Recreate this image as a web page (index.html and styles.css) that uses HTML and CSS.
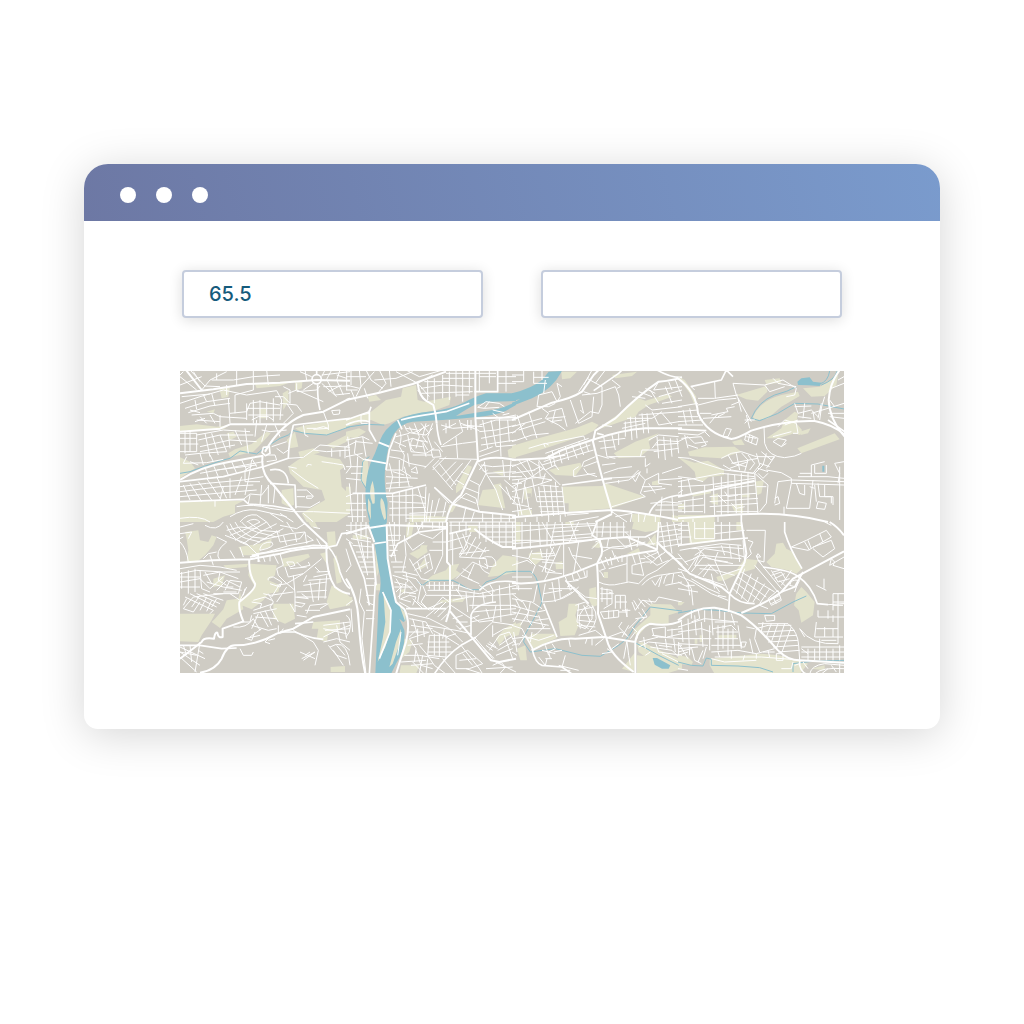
FILE: index.html
```html
<!DOCTYPE html>
<html lang="en">
<head>
<meta charset="utf-8">
<meta name="viewport" content="width=device-width, initial-scale=1">
<title>Map</title>
<link rel="stylesheet" href="styles.css">
</head>
<body>
<main class="window">
  <header class="titlebar"><span class="dot"></span><span class="dot"></span><span class="dot"></span></header>
  <div class="content">
    <form class="fields">
      <input class="field" type="text" value="65.5" aria-label="First value">
      <input class="field" type="text" aria-label="Second value">
    </form>
    <svg class="map" viewBox="0 3 1992 906" role="img" aria-label="City map">
      <!-- north-west -->
      <g>
        <path class="park" d="M0 168L50 163 110 170 150 165 130 178 50 180 0 184ZM0 262L30 275 45 295 0 325ZM0 395L190 392 165 405 165 430 130 440 100 456 0 456ZM325 290Q370 255 400 252L440 262 480 268 495 290 480 300 485 350 510 375V430L470 456H380L365 430 400 410 435 390 425 360 370 350 330 310ZM305 360L340 355 342 405 325 410 305 400ZM380 165L510 145V170L440 195 370 190 345 175ZM440 225L510 190V210L460 235ZM320 210L345 185 355 230 330 235ZM145 250L165 238 215 222 260 185 272 190 240 225 220 245 150 262ZM225 42L310 35 350 30 300 48 230 55ZM345 35L368 30 365 55 345 62ZM118 55L150 50 145 80 125 85ZM80 125L105 118 100 130ZM238 118L258 115V145H240ZM308 70L325 60V95L310 120ZM140 190L160 185 170 200 150 210ZM355 245L400 235 420 248 360 262Z"/>
        <path class="stream" d="M0 310L30 305 70 290 130 270 150 265 180 243 230 252 245 240 300 205 325 195 340 182 375 190 440 195 510 170"/>
        <path class="main" d="M0 330Q60 290 150 275L250 257M0 185L120 176 150 163H320M0 70L100 58 200 42 300 38 410 30 510 32M255 245Q300 165 370 135L430 125Q460 110 510 85M248 257Q240 310 280 345L370 456M18 0L65 60"/>
        <path class="road" d="M410 0V15M413 42Q412 90 420 120M340 165L510 145M330 210L340 165M330 210Q325 240 325 265L250 290 130 320 0 335M270 340L345 345 348 415M0 395L190 388 205 402 280 408 345 420M250 232L268 230 270 250 256 257 246 248ZM396 28a14 14 0 1 0 28 0a14 14 0 1 0 -28 0M325 340Q320 290 270 300"/>
        <path class="lane" d="M0 20L50 60M0 45L65 20M30 0L75 48 120 50M65 60L90 30 140 5M40 5L60 35M10 5L0 15M95 30H160L220 20 300 15M110 10V30M220 0V60L165 75V130M170 0V45M260 0L265 45M140 45V75M0 100L60 80 130 60 200 75 290 62M5 80L90 72M15 115L80 95 150 85M25 128L90 108 150 100M70 75L80 95M95 70L105 108M45 90L50 118M145 85L150 160M150 130L200 125 210 100 240 95 300 105M200 100V150M220 90V160M240 90V160M260 95V150M280 85V155M290 62L305 90 300 150M285 80H310L330 100V60L310 50M325 70L350 60M350 40V62M350 60L430 95M300 100L350 105 365 125M200 115H300M205 135H310M215 150L235 140H265L280 150M320 100L340 130 310 160M35 135L100 130 120 140 200 145M50 150L120 155M60 140L80 160M90 135L105 160M120 135V170M45 155L75 145M30 120L60 128"/>
        <path class="lane" d="M0 190H50V245H0M15 185V250M30 185V245M0 205H50M0 222H55M50 195L130 180 210 185M55 210L120 195 220 195M60 230L150 210 230 215M60 245L165 225M75 190L90 260M95 190L115 255M120 195L140 245M145 190L150 235M165 180L185 225M195 175L205 250M15 255L60 250 140 245M20 260L10 280 80 278 130 268M30 275L55 285M60 250L70 285M90 255L100 275M0 350L80 340 190 330 250 320M0 365L120 350 220 345M0 380L110 370 230 360M10 345L30 390M30 340L65 395M55 335L95 390M80 325L120 385M110 320L140 385M130 350L120 390M150 325V385M185 320L165 375M215 270L205 330 195 375M220 285L195 300V335H240M75 290L85 325M100 285L115 320M130 280L145 315M155 275L170 310M185 270L200 300M110 300L230 285M60 310L250 275M215 265L230 290M190 388L210 372 245 375 265 350M210 375L205 400M245 345L240 405M265 345V400M285 350L280 400M300 375L330 410M105 390V410M245 180L270 185 320 180M260 165L245 215M285 165L300 200M230 150L225 200M260 255L285 255 290 270 260 275M290 235L310 250 325 240M275 230L320 215"/>
        <path class="lane" d="M435 0L425 20M455 0L440 28 465 75 510 70M480 0L470 30 490 75M500 0V60M425 15L510 5M425 40L470 80M420 48L410 60 350 65M400 40L370 60M395 20L360 5M430 50L510 48M445 65L485 45M470 15L500 25M375 0L380 30M455 122L480 120 478 132 460 134ZM430 125L445 165V180M380 175H410L430 170 445 175 400 178M370 165L375 195 385 200M325 265L370 262 400 240 440 245 510 240M400 240L420 225 510 232M325 290L350 295M380 290Q380 280 395 285M425 275L460 280 490 285 495 300M455 235V260M480 240V260M495 228V265M335 300L375 330 415 355M350 360H380L400 378 395 385H380V378H400M350 380H375M348 410L390 412 420 395M170 410Q220 400 270 415L340 425 400 425 510 430M150 440Q190 415 230 420L320 440M180 456Q200 430 230 435L260 456M200 456Q225 440 240 456M0 445Q60 435 90 456M270 430L310 456M300 430L340 456M370 430L400 456"/>
      </g>
      <!-- river bend -->
      <g transform="translate(498 0)">
        <path class="park" d="M0 150L60 130 75 125 120 90 165 80 170 55 210 45 215 90 235 95 315 80 310 105 270 120 170 140 130 160 110 165 75 150 0 170ZM0 185L40 175 60 185 30 205 0 200ZM50 265L65 270 68 300 60 350 45 335ZM330 350L365 285 378 290 350 355 330 370ZM410 360L465 355 478 415 395 405ZM485 240L510 228V265L488 262ZM310 405L335 400 320 425 305 430ZM190 435L300 440V456H190ZM440 305L475 300 470 318ZM440 345L465 340 468 355 445 358ZM0 350H14V400L0 410ZM65 80L90 75 105 90 70 95Z"/>
        <path class="stream" d="M0 172L60 163 115 165M70 260L50 275 45 330 60 355"/>
        <path class="water" d="M510 70H420Q390 78 350 100 310 118 260 124 190 130 155 150 115 175 100 215 88 250 75 275 58 320 58 380 60 420 72 460H122L125 400Q112 340 118 290 125 220 145 190 165 160 200 155L290 150Q350 145 400 140 450 135 480 122L510 105V95Q470 115 440 120L330 138Q365 115 385 105L430 95 510 93Z"/>
        <path class="park" d="M80 332Q64 365 80 402L86 400Q88 360 80 332ZM105 384Q98 410 115 450L120 445Q118 390 105 384ZM66 385V420L75 450 74 400Z"/>
        <path class="main" d="M0 90L100 68 200 42 300 5M215 40Q220 80 240 92L262 105Q270 130 272 160M388 0V140L396 270 345 375Q310 400 300 456M390 145L510 142M396 275Q430 255 510 270M98 217L130 230M320 402L400 425 510 437"/>
        <path class="road" d="M272 160Q275 200 285 225M0 150L70 125 75 110M70 120V180L90 215M55 268L120 280M155 150L168 178M20 370H140L240 345M265 352L325 405M455 0V65H385M165 150Q200 140 300 125L370 100M150 190L130 240 120 300M0 165Q40 145 70 155"/>
        <path class="lane" d="M0 45L40 55 85 5M0 20H60M15 0V45M40 0L45 50 30 80M60 0L75 30 110 55M85 30L150 25 200 5M100 0L120 40 95 70M130 0L135 50M150 5L215 40 260 15M180 0L220 20 290 0M55 55L65 85M15 60L30 95M0 60L35 60M240 92L215 60M225 55L290 45 380 50M225 70L380 65M245 30V90M265 25V100M290 15V85M310 5V90M330 0V80M350 0V95M370 0V70M290 25H385M300 10H450M220 45L250 80M235 35L310 35M400 20H450M400 0V65M430 0V40M455 20H510M455 40H510M480 0V65M330 75H370M430 95L415 115 395 112 420 95 460 100 475 110M415 115L460 112M440 120L475 128"/>
        <path class="lane" d="M0 210L50 200 70 210M0 230L30 215 80 220M5 200L15 290 0 310M30 210L25 250 55 270M50 200L60 260M0 260L50 250M0 290H50M15 310H50M0 325L45 330M35 260L30 370M10 340L20 456M35 370V456M50 370V456M0 400H60M0 420H60M5 440H60M0 380L25 370M70 130L45 135V160H65M160 180Q170 200 160 230L175 255 170 300M175 165Q185 200 210 185L250 165M170 215L200 205 230 215 245 240M185 195L195 245 240 250 265 235M200 205Q185 230 205 245M215 190L235 170M190 170L200 190 240 195 260 175M180 175L215 180M205 160L220 200 210 235M240 160L230 200 245 220M225 160L250 190M260 160L245 200 260 240M210 210L245 215M190 225L230 230M150 200L190 190M145 215L180 230M135 240L175 245M130 260L160 265 190 280 240 290M120 300L165 300 195 320M130 280L140 320 130 365M160 270V350M175 290L190 350M120 320L215 325M120 340L190 335M120 355L200 350M140 305L175 315M195 300L210 290 215 310 195 305M185 250L190 290M200 255L260 255M255 240L280 240 285 260 260 262ZM265 215L290 245M230 220L240 260"/>
        <path class="lane" d="M285 165L320 175 385 170M290 180L330 160M300 160V190M310 150V175M340 150L350 185 290 225M350 165L410 170M365 150V180M375 150V180M330 200L335 265M285 230L350 220 390 215M280 265L395 268M345 160L400 182M280 270L260 290 320 360M280 280L330 345M265 265L250 280 235 295M260 300L300 260M285 320L330 275M300 335L350 280M315 350L375 270M330 330L355 345M345 305L370 315M120 380L210 375 240 385M130 395L240 400M130 415L240 412M130 435H240M140 370V456M160 365V456M180 360V456M200 355V456M215 350L240 430M240 350L235 456M265 352L310 400M250 370L240 456M260 390L250 456M280 385L265 440M300 395L290 440M190 430L300 425M180 445H300M320 405L360 370 390 385 400 425M340 380L390 400M350 350L400 370M370 330L400 345 395 400M396 280L420 310 450 360M405 285L440 290 510 285M420 310L400 350M415 275L420 310 510 305M430 320H510M470 270L475 320M495 270L490 330M400 300L415 280M410 300Q415 310 425 300M400 165L450 150 510 150M400 185L450 180 510 165M405 205L510 185M405 225L510 210M400 245L440 230M410 150L425 235M435 150L450 230 510 225M460 145L465 260M485 150L490 215M400 260L460 240M440 130L460 145 510 135M470 135L490 130M450 360L470 420M460 345L510 400M475 330L510 360M480 350L495 390M360 410L350 456M385 425L375 456M410 430V456M440 430V456M465 435V456M490 438V456M300 445H510"/>
      </g>
      <!-- north-east hills -->
      <g transform="translate(996 0)">
        <path class="water" d="M0 70Q60 55 90 30L110 5 150 3Q120 60 60 85L0 108V98L25 88 0 92Z"/>
        <path class="park" d="M0 228L60 210 190 175 240 155 260 165 245 182 220 195 100 235 0 265ZM265 170L330 125 380 85 400 92 470 72 480 80 410 105 380 125 370 140 260 178ZM305 250L370 215 440 190 410 215 415 235 385 260 320 264ZM110 300L145 290 205 278 210 290 190 318 130 315ZM150 350L270 348 280 340 400 380 300 415 170 425V400H155ZM35 355L60 355 58 380 38 390ZM20 420L60 420V437L20 435ZM360 432L445 435V456H360ZM148 5L195 5 175 25 150 28ZM300 15L375 5 360 18 310 25ZM420 335L440 330 442 345 420 345ZM480 435L510 440V456H480Z"/>
        <path class="land" d="M45 370h12v12h-12Z"/>
        <path class="main" d="M0 150L120 98Q180 85 210 65L245 15 260 0M0 270L100 265 150 240 240 210Q330 180 400 175L510 175M510 22Q490 30 440 35 380 75 310 145L250 182 243 215Q265 310 298 418L300 430M0 442L170 428 300 420Q380 425 510 452M250 456L300 432"/>
        <path class="road" d="M245 62L320 10 330 0M255 190L275 195M435 0Q480 25 510 22M100 265L160 255M150 345L300 325M410 435Q430 380 510 375"/>
        <path class="lane" d="M0 35H35V3M0 15H35M65 5V40H105M65 22H110M90 0V30M75 110L80 75 120 65 135 95 145 80 135 40 150 50M95 70L100 30M75 110H110L130 100M175 90L200 160 240 140 245 80M205 90L215 130 205 120M190 160L235 125 260 130 270 105V50M210 75L255 70 310 50 320 75 325 110M225 25L270 50M240 0L215 45M280 0L250 40M200 65L230 20M300 30L325 50 315 55M215 65L235 72M0 190L40 160M0 215L60 195 110 190M15 135L35 195 45 210M50 125L75 205M90 115L110 130 100 145 140 165 160 180M0 170L90 145M20 180L100 155M110 125L150 115 165 170M130 120L120 160M105 145L160 140M115 155L150 150M50 235L100 220 110 225M100 232L95 222 215 198 220 210"/>
        <path class="lane" d="M100 250L230 205M95 275L150 255 235 225M90 285L245 240M120 240L130 290M140 240L150 280M160 230L170 270M180 225L195 265M200 215L215 255M220 215L230 245M110 255L120 290M80 270L100 300M100 300L130 285 140 300M210 290L215 275 250 260M215 290L255 275M215 295L225 310 255 320M185 320L250 310M185 320V300L200 290M255 255L290 265M275 200L285 260 310 265M260 215L340 205M265 235L310 230M300 195L310 240M320 190V225M340 155V200M355 140L360 210M370 140L375 205M390 130L395 190M405 130L410 190M335 160L410 150M330 175L400 160M345 145H420L450 125M420 125L440 165 500 155M450 130L480 165M380 135L510 125M400 105L420 120 510 110M415 60L440 100M440 80L510 60M450 100L510 90M460 50L480 100M440 35L425 60 510 50M470 35L480 60M490 30L510 80M360 80L400 85M380 65L420 80M400 55L430 70M270 165L300 170M410 210L440 195 500 200M420 235L440 210 500 215M435 200L440 265M455 200L460 270M475 205L480 260M495 205L500 250M430 225L500 220M425 245L500 235M385 260L390 240 440 240M290 260L400 260M400 265V290L415 280M270 285L310 280M275 310L320 295 360 290M275 325L370 320M280 340L350 330 385 305 370 335 360 320 380 300M320 340V330M380 310L400 330 385 370 400 380M400 330L440 310V340L480 345M405 310V295M390 350H450M395 365L460 355M300 410L400 380M410 340L430 370M450 310L510 290M440 330L510 325"/>
        <path class="lane" d="M0 290L50 270 100 300 145 345M0 310L70 300M45 270L65 320M20 270L60 320 120 330M0 330L100 320M15 290L45 325M80 275L85 320M95 295L60 320 0 350M65 300L85 290M100 310L90 340M120 330L75 345 0 365M150 350L160 440M130 335L140 435M115 345L125 438M95 345L110 440M80 350L90 440M60 325L75 395M40 330L30 400M20 330L5 400M85 345L140 350M80 365H150M75 380H155M75 395H155M80 410H158M85 425H160M0 380L25 385M0 400L50 410M10 350L30 435M0 425L60 415M15 400L20 440M50 410L60 440M40 350L50 410M0 340H30M0 320H30M10 445V456M40 445V456M75 440V456M110 438V456M145 435V456M165 435L230 430M170 456L260 440M310 440L360 430 355 456M380 430V456M400 435L395 456M430 435V456M415 400L460 395 510 400M450 380L445 440M480 380L485 445M430 420L510 420M435 405H510M300 425L345 456"/>
      </g>
      <!-- north-east lakes -->
      <g transform="translate(1494 0)">
        <path class="park" d="M225 140Q250 90 310 75L360 65 365 78 310 110 270 145 230 152ZM375 55L425 50 460 30 480 15 475 45 440 78 400 80ZM175 75L265 48 268 65 240 92 205 88ZM260 30L305 25 310 38 265 42ZM265 205L310 175 320 150 350 125 360 130 355 160 372 180 365 195 350 190 300 205ZM365 185L398 175 390 190 368 195ZM358 235L470 190 485 208 370 250ZM162 215L190 208 200 225 170 225ZM30 245L80 232 170 230 190 245 130 265 80 262 35 258ZM0 262L50 278 90 272 138 300V315L90 322 75 335 55 330 50 305 35 290ZM230 335L258 330 250 370 238 375ZM0 20L20 30 55 80 50 105 35 70ZM40 370L100 360 98 370 45 380ZM0 435H110V456H0ZM100 375L120 370 120 405 100 400ZM160 405L195 400V430L170 425ZM0 405L20 400V418H0ZM190 375L215 370V382H190Z"/>
        <path class="water" d="M358 35L370 25 395 22 405 35 430 38 425 48 390 46 360 45ZM433 287h6v18h-6Z"/>
        <path class="stream" d="M455 3Q450 35 425 42M355 50Q330 65 290 75 240 95 220 145L245 152Q300 135 350 100L420 102 498 117M478 3Q470 30 430 45"/>
        <path class="main" d="M0 25Q55 65 60 130 85 190 160 207 180 205 220 182 320 150 410 153 470 165 500 195M0 380L90 362 230 332M0 445L190 433Q330 425 450 456M485 0Q455 40 452 90 455 150 500 200"/>
        <path class="road" d="M38 50L130 30 145 0M0 178L85 182M145 0L165 20M450 150L500 185M190 433V456"/>
        <path class="lane" d="M60 85H110L180 75M40 50L50 60M110 35L112 85M60 105L120 90 175 85M165 40L175 75 200 120 220 155M165 40L260 45 315 30 355 55 350 75 325 80M180 85L190 125M260 45L275 65 320 50M285 25L300 40 355 50M160 105L185 95M100 135L150 125 145 115 170 110M120 140L140 130M95 160L120 130M65 130L100 130M75 145L160 140M200 150H230M205 135L215 175M215 145L200 160M0 110L60 100M0 125L60 120M0 140H60M0 155L75 150M0 165H75M15 120L25 165M35 115L45 160M0 190L60 195 80 185 95 200M10 205L70 200 85 225 70 230M0 215L30 200 50 220 90 215M20 195L30 235M30 225L60 235M145 175L160 178 150 200 135 200 140 185ZM205 190L200 210 235 225 240 205ZM215 195L210 215M225 198L220 220M235 205L205 200M258 170L260 220Q270 260 320 263L350 258 370 250M285 215L300 205 325 210 310 230M285 215L310 230 325 220M285 200L340 185M300 170L320 150 355 160 360 190 345 190M320 165L360 150M350 100L360 130 400 120 420 140M350 110L400 108M430 115L425 150M400 130L450 115 498 100M380 100L375 145M405 125L410 155M430 100L420 145M440 80L425 130M455 90L470 110M450 130L498 130M455 140L498 145M360 140L400 145M460 55L498 40M480 30L498 20"/>
        <path class="lane" d="M0 262L35 265 75 280 140 300 230 310M130 265L160 250 190 245 235 260 290 260M135 285L160 300 225 310M150 255L165 280 205 290M175 250L185 300M190 248L210 270 200 305M210 255L230 280 215 300M235 250L245 285 225 310M160 280L240 265M155 295L210 275M265 250L255 285 230 310 270 345 265 400 245 425M250 245L280 270 290 260 265 295M245 280L275 290M240 295L270 305M240 310L255 325 270 310M265 300L310 308 340 325V340L325 415H395L405 330M290 400L300 335 340 330M290 385L300 380 305 400 290 405M340 330L498 335M340 340L498 345M360 320H450L498 325M365 310H400V320M400 320V285L440 275M410 285V310H445V285M355 340L365 370 380 375V345M420 340L425 380H460V400M440 345V380H465V405M420 395L445 400 440 418 415 415ZM410 345L415 395M480 340L485 310 470 280 498 275M485 290V450M395 350L410 355M318 410V435M0 320L40 325 75 335M0 335L130 310 230 320M0 350L90 345 230 325M10 330V375M30 325L40 370M80 345V430M105 320L110 435M130 320V435M150 310V430M170 315L175 430M190 310V430M210 305V430M230 310L240 430M95 380L235 370M95 395L240 385M95 410L240 400M0 395L75 385M0 410L80 405M0 425H75M20 390V430M45 380V425M115 425H240M155 355L230 345M110 350L230 335M140 365L150 380 180 375M120 375L145 400M160 400L175 415 200 410M0 370L15 360M235 350L265 350M15 450V456M45 446V456M120 440V456"/>
      </g>
      <!-- south-west -->
      <g transform="translate(0 456)">
        <path class="park" d="M20 50L15 30 55 25 60 55 85 60 95 40 110 45 100 70 75 100 50 120 20 118 25 85ZM0 275H105L95 295 65 340 55 360 0 358ZM105 290L130 262 140 235 175 230 180 210 190 262 140 290 120 318 95 300ZM210 125L290 130 285 160 265 175 300 190 295 210 265 215 250 235 215 262 185 250 180 235 225 195 205 160ZM175 75L240 65 275 50 270 75 240 85 235 100 190 100ZM280 245H340L345 290 315 305 280 290ZM305 110L385 95 390 105 350 125 310 135ZM440 30L465 28 468 70 445 80ZM420 95L440 90V125ZM440 240L455 190 500 215 510 225V250L450 262ZM400 300L480 295V320L445 335 440 360 410 350 415 320 395 320ZM452 435L495 432V450H452ZM385 0H405L415 20 395 15ZM100 170L135 160 125 190 100 195ZM130 130L205 125 200 135 140 140ZM460 110L470 100 485 180 470 185Z"/>
        <path class="main" d="M0 122L100 115 210 112 300 95Q370 75 445 78M370 0L440 65Q435 150 465 195 490 215 510 215M0 410L65 360Q70 345 102 350 105 330 112 332 115 350 128 345V320L190 298Q175 265 178 240 230 200 225 185 205 155 208 112M60 452Q105 445 125 410 140 370 165 370 230 370 290 335 320 325 340 320L400 285 510 262"/>
        <path class="road" d="M215 100L300 85 400 70 445 72M445 75Q470 100 480 150 495 190 510 200M445 75L470 70 485 35 510 32M345 305L400 300M300 330L345 330 370 340Q400 350 430 352M0 370H60L125 380 170 378M210 105L235 100V120"/>
        <path class="lane" d="M0 15L40 5M0 35L35 30 25 50M0 60Q20 80 25 120M10 45L0 50M75 10Q110 30 130 0M110 45L140 60Q100 90 120 115M135 40L200 65 235 100M140 10Q150 40 180 60L205 70M150 5Q165 40 200 50L240 60M165 0Q180 30 215 45L260 50M185 0Q200 20 230 30L290 45M205 0L240 25 300 30M140 25L180 15 230 20M150 40L200 20 240 0M165 55L215 25 260 0M190 65L240 30 290 5M220 70L270 40 310 20M240 80Q245 60 275 60 290 75 240 85ZM230 95L260 90 330 70 385 60M240 55L330 35 375 30 360 50 300 60M300 10L350 20 375 5M320 0L340 30M290 25L300 60M260 0L275 20M310 40L320 70M345 35L350 60M375 30L380 65M380 40L400 55 380 60M410 50L425 75M400 15L420 20M70 110L85 95 110 90M150 85L165 110M180 75L190 105M90 100L100 130M0 140L60 130 120 135 170 145M0 155L50 145 130 150 180 150M0 180L60 170 90 200M5 150V200M25 145V215M45 140V210M0 165H60M0 195H60M60 145L65 200 90 210M70 160L120 150 175 170M90 200L130 165M80 180L130 195 185 205M110 205L140 175 180 195M75 150L95 185M120 150L115 175 140 190M135 205L150 175 185 180 175 215M140 195H160M130 210H170M100 215L175 215M10 260L40 225 130 215M15 225L100 265 90 275M10 260L40 270 60 240M30 215L110 255M50 215L120 245M70 215L130 235M20 230L10 250M60 220L35 255M80 225L60 265M95 235L80 268M110 230L95 255M150 215L180 235 200 195M195 200L190 220"/>
        <path class="lane" d="M240 120L235 110M250 105L255 120M280 95L295 125M270 100V118M300 95L310 130 290 140 295 160 315 180M320 120L330 135 345 130 340 120ZM350 120L365 135 390 130 385 120M330 140L380 135M265 175Q260 165 280 165L305 180 300 195 270 185M290 190L320 185 370 155 425 110M315 180L345 205M315 135L325 165 370 155M340 160L345 215V270M345 270L330 245M345 250L365 255 375 245 345 240M345 225L385 230 365 215M350 210L440 205M350 225H440M370 190L440 180M385 175L450 170M400 165L450 155M410 150L450 148M405 135L420 150M380 160L370 180M390 180L400 240M420 170L415 235M440 160L435 230M300 185L275 225M320 195L290 240M265 215L280 240 270 255M250 215L270 220 340 210M220 235L255 225 275 235M215 240L245 245 240 260M220 265L280 245M220 275L290 260M225 285L290 290M240 270L265 315M255 265L275 310M270 255L295 300M215 280L210 300 185 300M220 290L240 325M235 275L215 320M215 310L265 325 290 320M200 350L215 355 225 330M195 350L240 340M245 320L210 345M265 355L285 350M295 310V335M310 320L300 335M270 345L255 360 270 365M375 265H420M380 275L390 250 440 245M350 280L380 285M420 260L445 245M180 380L190 400 215 400 220 390M160 315Q200 320 220 290M340 325L400 360 415 385 405 430M360 390L405 410M370 415L405 390 365 410M375 400L390 390M430 310L510 300M430 320L500 335M435 325L510 320M430 360L470 350 510 360M445 370L470 400 500 410M450 375Q490 350 505 400L510 430M460 385L490 430M470 370L495 400M480 360L510 385M430 345L470 325 510 310M470 310L480 360M490 300L500 350M0 390L50 400M0 375L75 410M0 390L60 430M0 405L50 450M10 370L20 400M30 370L35 420M60 360L45 450M70 395L55 385"/>
      </g>
      <!-- river south -->
      <g transform="translate(498 456)">
        <path class="park" d="M0 225L18 225 20 240 0 250ZM182 5L205 0 195 50 180 45ZM365 10H395V30L370 30ZM225 70H245L235 95 215 100ZM190 95L240 70 245 90 215 110ZM215 140L235 110 245 130 220 145ZM235 180L260 160 300 145 310 130 340 125 330 145 345 155 315 175ZM425 165L440 130 470 100 510 105V150L470 160ZM285 235L360 225 350 240 280 242ZM90 70L98 150 92 165 88 90ZM90 185H102V205H90ZM175 350L200 355 190 390 165 410ZM165 430L220 430 210 456H160ZM450 350L475 320 510 300V330L480 345 460 370ZM20 40L65 40 68 52 20 52ZM160 205L178 200 175 215Z"/>
        <path class="water" d="M68 0H120L122 60Q128 130 140 190L152 245 178 265 180 295 172 300 160 290 175 325Q180 380 150 425L135 456H88L95 300 98 220Q110 190 98 140L85 60Z"/>
        <path class="park" d="M112 210L135 260 132 330 118 375 95 420 110 350 118 300ZM150 360L165 320 163 360 140 425 130 435ZM160 250L180 275 178 300Z"/>
        <path class="stream" d="M510 148L480 150 450 170 420 180 400 203 370 203 340 185 320 175 250 175 230 190 215 180"/>
        <path class="main" d="M68 18L122 10H150L300 15M122 10L125 110Q140 200 150 240L175 262Q195 300 180 360L150 456M303 0V120L312 130V260L300 300M0 170Q35 220 38 300 45 400 58 456M0 35L68 15 85 60M80 65L90 190M385 20Q420 50 470 75L510 75M310 265L435 415 460 420 510 410"/>
        <path class="road" d="M85 65L120 60M135 105L155 65 220 30 300 20M310 35L375 20M10 60L55 170 70 250M400 205Q430 170 510 180M375 340V280Q385 245 450 240M110 210L135 265 132 330 100 410M88 180L82 280 75 380 70 456M265 456Q300 400 345 370L390 345M180 260H300"/>
        <path class="lane" d="M0 10H70M0 25L75 50M15 0V35M30 0V40M45 0V50M60 0V45M15 50L75 60M20 70L80 75M0 50L20 65M30 90L85 90M35 105L85 105M40 120H88M45 135H85M50 150H85M45 60L65 160M30 35L60 140M0 80L15 130 0 150M65 45V110M60 170H85M60 190H85M60 220H85M62 240L85 250M45 200L40 240 55 270 48 350 60 456M60 265H85M60 290H85M0 250L20 235M0 280Q20 290 10 330L0 345M15 260L20 330M130 0L140 60 150 120M145 0V70M160 0V55M125 40H165M125 55H160M130 70H155M130 85H155M130 100H150M135 120H170M140 135H180M145 150H180M175 40L180 100 170 150 215 160M180 55L215 30 230 0M190 0L185 40M210 0L220 35 260 50 290 25M225 0H300M230 0V20M260 0V20M280 0V20M175 50L200 85 235 60M200 130L225 110 250 95 260 140 235 155M215 120L225 150M190 110L225 170 250 175M235 100L245 140M205 145L250 120M180 150L185 180M290 0V100L265 155M315 0V80M320 30V130M300 60L375 40M305 85L350 75M260 60H300M250 85H290"/>
        <path class="lane" d="M340 0V30M360 0V40M400 0V50M420 0V60M440 0V65M460 0V70M480 0V75M500 0V75M310 10H510M310 0H510M400 30H510M410 45H510M440 60H510M395 15H510M330 30L350 80 340 100M350 35L365 75 340 105 420 110 425 140 380 120 340 160 330 170M375 30L350 90M390 45L360 100M405 60L375 105M420 75L400 110M360 60L420 90M340 95L430 85M400 110Q450 90 450 130 430 140 415 125M400 115Q400 145 430 155M385 125L365 170 400 185M350 140L375 155M345 160L380 175M320 180V200M340 185L335 210M250 180V200M265 180V205M280 180V205M295 180V205M240 190H335L380 205M245 205H330L400 215 510 190M240 220H320L420 225M230 190L240 215 225 240 250 265M140 160L190 175 215 205 190 215M145 180L185 190 200 205M150 210L170 190M155 225L175 210 210 215M150 170L165 195 160 230 195 240M180 180L175 215M165 230L190 220 210 225 200 250M170 160L210 170 225 190 215 240 245 260 290 240M145 195H200M160 240L195 260M200 230L230 260M255 265L290 225 310 240M265 275L300 240M275 285L310 250M240 285L270 260M285 295L305 275M185 275L250 290 310 320M190 290L240 300 260 335M195 310L260 320M185 330H245M190 350L250 330M185 370L230 365M190 350L210 380 205 420M215 320V360M230 300L235 345M200 290L215 340M210 325L190 345M175 400L220 400 280 410M165 420L240 415M240 310L330 325 375 335"/>
        <path class="lane" d="M250 340H300V410M250 340L245 400 300 405M245 360H310M245 375H315M245 390H320M265 335V400M280 335V405M260 325L300 345 340 370M310 320L350 360M330 310L345 325M295 320L290 350M320 290L350 280M330 300L365 300M340 320L375 310M300 345L330 335M220 370L245 400 265 430M210 385L225 430 260 440M200 420L235 456M230 400L220 456M245 410L240 456M195 430L260 425M265 430L300 456M290 410L330 456M330 400L365 385 410 425 370 440 330 440ZM350 395L380 430M340 415L390 410M360 440L410 456M345 370L400 440 410 456M385 345L440 410M390 345L440 300M315 250L375 290 400 280M320 235L370 225 510 215M330 200L350 230M360 210L365 270M385 205L380 260M410 210L415 245M440 205V240M460 190L465 300M490 185L495 280M400 190L440 220M430 185L445 210M370 250H510M380 270L430 265 510 260M375 300L420 290 510 275M380 285L400 300 440 295M450 250L440 300 510 310M420 260L430 290M440 310V345M440 340L475 320 510 315M430 385L460 340 490 330M420 370L440 385M430 360L450 375M415 385L435 400M410 375L445 410M425 365L455 380M450 400L500 380M455 385L510 355M460 370L510 335M475 340L500 410M490 330L510 370M440 430Q475 410 475 440L460 456M420 440L500 435M430 410L510 450M165 330L155 400"/>
      </g>
      <!-- south centre -->
      <g transform="translate(996 456)">
        <path class="park" d="M12 0H25V60H12ZM365 0H445L440 25 400 30 360 20ZM405 65L430 35 435 72ZM240 75L265 52 270 65 262 78ZM345 95L380 78 385 92 355 98ZM50 95L90 88 92 110 70 130 55 118ZM130 122L150 118 155 140 132 142ZM0 110L20 118 15 145H0ZM275 150H288V168H275ZM232 200L252 195 255 250 242 255 232 235ZM140 300L165 285 170 245H200L190 280 200 310 188 340 145 342ZM45 350L60 335 130 335 135 348 95 365 65 380ZM415 245L475 245 500 270 470 280V305H415ZM365 325L415 280 420 295 375 345ZM375 365L390 360 510 415V440L460 456H410L400 405 380 390ZM15 380L40 370 45 415 25 415ZM330 440L370 390 365 450ZM375 400L420 405 425 456H375ZM160 0H185V10H160ZM0 310L30 300 20 340 0 345Z"/>
        <path class="land" d="M375 230L510 240V248L430 246Z"/>
        <path class="stream" d="M0 148L55 148Q75 160 80 195L90 240Q75 275 60 300L38 340 35 360 55 390 130 380 210 400 265 403 320 370 345 350 370 310 415 255 510 267M365 360L395 375 440 400 500 430"/>
        <path class="water" d="M422 408L435 408 475 430 470 440 450 440 428 428Z"/>
        <path class="main" d="M0 80Q130 70 250 52L345 45 435 82M0 183Q80 190 180 155L255 125Q330 100 435 85M258 50Q275 75 268 100L255 125Q260 190 258 275L285 355Q295 400 365 450M60 385Q130 345 190 350L275 345 370 360M370 456V360Q375 320 415 305 470 315 510 295M435 60L465 90 510 130"/>
        <path class="road" d="M60 380Q70 425 90 430L150 435 180 456M255 0L240 40 260 52M345 45L400 45 440 25M160 175L230 245M95 245L135 345M440 0L435 85M40 340L65 385"/>
        <path class="lane" d="M0 10H75L250 5M0 30L100 20 250 10M0 55H240M0 65L240 45M10 0V80M30 0V78M55 0V80M80 0L85 75M105 0V70M130 0L115 75 130 100M150 0L155 65M175 0L195 60M200 0L170 65M225 0L245 45M90 0L130 70M120 30L200 25M115 45L240 35M60 85L50 110 70 130 60 155M85 80L90 105 130 100M105 80L100 150M125 75L90 150M145 70L105 160 95 180M155 65V165M170 75L180 100 240 110M200 60L185 155M180 100L210 145M60 95H125M60 110L125 115M80 130L130 150M90 120L155 125M100 150L150 155M15 80V200M0 100L50 110M0 130L45 115 60 125M0 165H60M20 190V205M0 200H60M75 190L65 240M100 185L90 240M120 180L130 240M140 170L145 230 180 210M90 240Q160 240 200 195M110 200H180M95 215L150 205M160 165L175 205 185 195M165 180L200 175M180 155L185 175 225 165V145M195 150L205 170M215 145L220 165M165 195L180 190M250 60L275 50M265 50V75M290 48L285 75M310 45L340 75 370 60M265 75L330 80 400 60M270 90L300 75 430 65M240 80L260 60M255 0V45M275 0L270 45M295 0V45M315 0V45M335 0V45M355 25V50M250 15H340M245 30H350M340 30L355 45M380 45L375 75M350 45L360 85M300 85L310 110M265 110L280 140 265 145M280 105L290 130M295 105L300 130M310 100L320 120M330 100V120M290 140L345 125M345 100V180M360 95L370 125M380 95L395 160 360 155V130L400 120M385 110H400M260 145Q270 150 275 165M260 180Q290 195 325 185M325 185L350 180 380 185 405 160 435 145 480 110 510 110"/>
        <path class="lane" d="M445 0L460 90M465 0L480 95M485 0L500 75M440 15L510 5M440 30L510 20M440 45L510 35M440 60L510 50M450 75L510 65M410 45L425 70M395 100L435 130 470 115M400 90L430 110 460 90M405 105L440 90M415 125L450 95M435 85L450 120M470 90L490 110M400 120H420M390 190Q410 165 440 160L510 150M420 175L430 190 445 165M450 160L440 195M455 185Q460 155 475 155M480 185L485 155M460 190L510 180M265 200L300 205V245L275 260M265 215H300M265 230H300M270 195V240M285 200V250M290 210L305 215M310 220H340V260M310 220V260M325 220V260M310 240H345M265 270L320 265V285L275 290ZM290 265V290M305 265V285M320 270H345M340 260L345 285M190 250L220 240 240 260V290L220 320 195 310M200 245L195 300 230 320M195 265L245 255M195 280L245 280M200 295L250 300M205 310L250 315M215 250L235 300M230 250Q190 270 205 320M240 250Q270 290 230 330M200 220L215 235M195 205L220 225M185 195L205 215M220 225L255 230M330 265L355 265M360 240L370 265 390 235 430 240 440 225 510 240M365 235L380 260M380 230L400 255M395 235L415 250M410 230L420 245M390 260L405 285 370 290M400 285L385 300M380 270L395 290M350 310L330 345M345 340L320 315 330 300M350 320L380 290M290 345L330 330 350 345M360 315L375 330M355 350L370 330M345 355L335 410M345 360L350 400 355 430M300 380L320 365M285 380L300 390 270 395M275 345L250 325 200 340M275 350L250 370M240 350V370M225 350L220 365M170 350L175 375M120 365L130 380 110 390 115 410M100 370L110 400M90 385L130 395M100 410H120M100 430L105 410M125 390L150 385M80 405L100 430M150 435L160 400M145 445H175M140 430L200 445"/>
        <path class="lane" d="M0 230L60 240 90 260M0 250L70 270M0 270L80 285M0 290L60 300M10 230L25 260 5 300M30 235L50 270 25 310M55 240L45 290 60 310M0 310L30 320 40 340 20 370M0 350L40 345M5 330L15 390M0 370L20 365M0 390L15 400M30 340L50 350 75 335 100 310M60 300L110 310M45 320L115 320M80 280L95 320M45 345L80 355 125 340M55 360L60 330M0 215L30 240M75 270L100 265M70 295L110 290M420 320L460 315V345L425 340ZM420 340L450 345M465 325L510 320M465 345L510 335M480 320V345M380 360L440 345 510 350M380 375L410 360 510 370M395 345L400 380M430 360L440 390 510 400M460 350L465 380M485 350L490 390M415 375L480 385 510 415M500 360V400M400 400L415 390M450 395L500 420M440 370L480 375M345 285V260M380 330L375 350"/>
      </g>
      <!-- south-east -->
      <g transform="translate(1494 456)">
        <path class="park" d="M30 0H110V60L80 62 35 65ZM175 0H192V25H175ZM265 120L290 95 295 65 315 62 325 80 345 90 372 140 355 155 330 145 280 135ZM115 165L175 145 200 110 240 115 230 140 180 155 140 175 120 178ZM348 250L355 215 370 195 385 210 410 240 405 280 370 302 362 265ZM65 340H75V360H65ZM50 350H58V365H50ZM120 340L175 338V348H120ZM95 410L250 395 300 400 345 410 390 425 365 456H110L95 430ZM0 400L30 405 45 420 40 430 0 425ZM0 240L20 240 10 250H0ZM400 440L440 430 440 445Z"/>
        <path class="stream" d="M0 273L60 262 120 265 190 273 280 275 345 240 385 222M0 420L40 430 75 432 85 408 100 412 100 430 180 432 245 437 285 450M345 450V425L400 418 498 415"/>
        <path class="main" d="M0 295Q50 255 110 257 160 265 190 280 235 310 300 385 330 415 365 415L498 422M190 273Q270 240 310 210L345 170 498 88M0 120L35 155 130 195 155 215M155 215L200 120 205 95 190 0M455 0Q480 15 498 40"/>
        <path class="road" d="M0 70L120 55 210 48M155 215L152 270M155 215Q180 245 230 245M255 135Q340 145 362 165 400 190 418 245L450 248M365 415V430Q370 450 385 456M310 210L350 195 375 150M320 0V30Q335 80 372 140"/>
        <path class="lane" d="M50 0V50H110V0M80 0V50M110 10H190M110 35L200 25M130 0V55M155 0V55M50 20H110M30 0L40 65M0 10H30M0 25H35M0 45H40M10 0V65M195 55L200 120M210 55L225 60 215 80 220 95 205 110M205 25H262L258 120 240 115M235 100Q240 120 250 125M235 105L240 95 248 105ZM5 85L60 75 130 65 190 70M40 80L130 75 195 80M50 100L80 80 150 90 200 105M45 110L70 100 120 105 190 110M60 80L90 110 150 120M30 145L60 100M40 150L75 105 100 110M60 160L90 130 200 130M75 165L100 130M90 125L120 155M110 115L130 160 190 140M70 85L50 130 110 130M130 70L140 100M155 70L160 110M180 70L185 120M120 90L110 115 165 125M0 95L30 130M0 140L30 150M20 120L50 110M65 140L115 145 170 160M50 165L100 175 125 210M80 170L140 190M100 155L110 200M130 160L150 205M40 170L90 200 125 215M0 160L45 180 100 215 150 235M10 150L40 200M0 180L30 195M25 190H50M30 180L35 220M0 200L60 210M40 200L45 250M120 220L145 225M190 150L290 210M180 165L265 225M170 180L245 235M165 200L210 240M200 140L175 215M220 155L190 230M240 165L210 240M260 185L225 240M275 200L245 245M240 115L310 200M230 130L300 210M270 230L300 205 310 235 280 250ZM275 235L305 220M280 245L308 230M285 225L295 245M280 145L300 180 335 170M280 160L310 150 325 175M285 150L305 145M290 170L320 155M310 190L340 145M335 190Q340 170 360 175M335 190L355 195 365 175M305 175L325 195M245 250L270 260M350 210L360 180"/>
        <path class="lane" d="M340 75L385 55 445 25 460 45 390 85ZM390 55L400 80M425 35L435 60M405 75L460 55 470 80 435 105 405 80M380 60L395 85M440 0L460 10M455 130L498 105M455 130L460 110 470 120 465 130 498 140M415 190L445 205M438 170V200M498 215H465V265M465 240H498M480 215V365M495 250L465 250M450 248L498 245M420 265V285H498M450 265V290M465 280V300M415 300L410 345H495M415 320H480M440 315V345M465 320V345M365 320Q400 370 480 365M365 320L380 345M370 375H498M370 390H498M370 405H498M390 380V415M410 380V415M425 350V415M445 380V415M465 380V415M485 370V415M370 380L390 395M430 355H475M260 280H290V295L265 298ZM240 305L330 305Q360 330 362 370L365 415M235 320L270 310 340 310M250 330L350 325M260 345L355 340M270 360L360 355M285 375L362 370M300 390L365 385M255 300L250 330M280 305L265 345M300 305L280 360M320 305L295 380M340 315L310 395M235 320L230 350 245 390M205 315L230 320M60 260L65 290 40 300M40 265V290M80 265V300M100 262L105 340M125 262V290M140 270V320M160 275L170 310M0 315L80 290 180 300M0 330L70 320 100 330M0 350H100M0 365L90 370M0 380L60 375M10 300L15 360M30 290L35 400M50 280L55 340M70 300L75 375M95 310L95 385M105 320L160 310 175 325M115 330H180M110 350H180M100 370H190M120 310V385M135 310V380M150 320V400M165 320V380M180 310L190 380M110 300H170M100 390L180 385 235 395 290 380M0 400L30 390M5 370L30 410M0 390L40 380M40 375L50 415 60 420M75 385L60 420 70 425M85 375L75 410M120 390L125 405M160 385V410M190 360H205L200 375H190ZM215 350L225 395M200 400L195 415M235 395V410M270 385L275 405M295 395H315V415H295ZM255 390H290M110 405L250 405 340 412M100 410L140 420 235 415M350 430L365 425M395 456Q400 430 440 425L498 430M410 456Q430 435 498 440M430 456L450 440M460 430L475 450M375 420L390 440M485 425V456M345 420L340 440 310 440M0 440L30 445"/>
      </g>
    </svg>
  </div>
</main>
</body>
</html>
```
FILE: styles.css
```css
* {
  box-sizing: border-box;
}

body {
  margin: 0;
  padding: 164px 84px;
  background: #fff;
  font-family: Inter, "Liberation Sans", sans-serif;
}

.window {
  background: #fff;
  border-radius: 24px 24px 14px 14px;
  box-shadow: 0 6px 44px rgba(0, 0, 0, 0.17);
}

.titlebar {
  display: flex;
  align-items: center;
  gap: 20px;
  height: 57px;
  padding: 4px 36px 0;
  border-radius: 24px 24px 0 0;
  background: linear-gradient(75deg, #6d78a4, #7a9bcd);
}

.dot {
  width: 16px;
  height: 16px;
  border-radius: 50%;
  background: #fff;
}

.content {
  padding: 49px 96px 56px;
}

.fields {
  display: grid;
  grid-template-columns: 1fr 1fr;
  gap: 58px;
  margin: 0 2px 53px;
}

.field {
  width: 100%;
  min-width: 0;
  height: 48px;
  padding: 0 25px;
  border: 2px solid #c5cddd;
  border-radius: 4px;
  background: #fff;
  box-shadow: 0 2px 14px rgba(0, 0, 0, 0.14);
  color: #155b7c;
  font: 500 20px/24px Inter, "Liberation Sans", sans-serif;
}

.map {
  display: block;
  width: 100%;
  height: auto;
  background: #cfccc4;
}

.map path {
  fill: none;
  stroke-linejoin: round;
}

.map .land {
  fill: #cfccc4;
}

.map .park {
  fill: #e3e3cd;
}

.map .water {
  fill: #8cc0cd;
}

.map .stream {
  stroke: #8cc0cd;
  stroke-width: 3px;
}

.map .main,
.map .road,
.map .lane {
  stroke: #fff;
}

.map .main {
  stroke-width: 6px;
}

.map .road {
  stroke-width: 5px;
}

.map .lane {
  stroke-width: 3px;
}
```
